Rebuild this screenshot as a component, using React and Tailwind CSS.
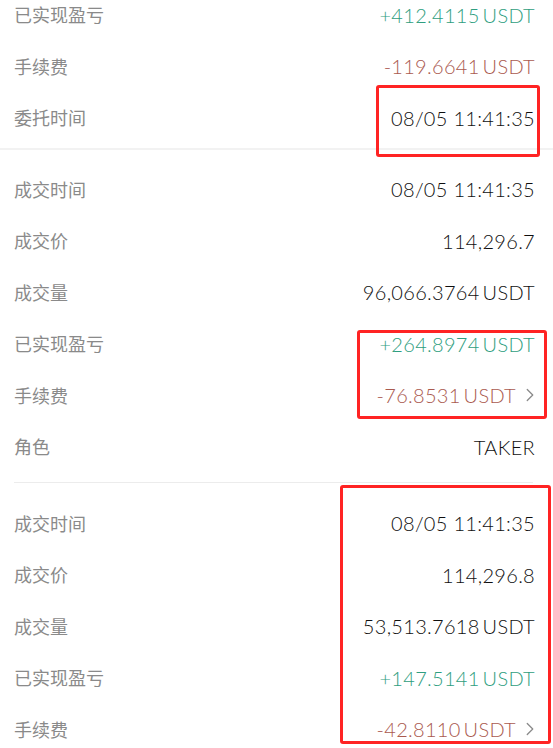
import React from "react";
import { ChevronRight } from "lucide-react";

const GREEN = "text-[#2f9e80]";
const RED = "text-[#aa5a4f]";

const sections = [
  [
    { label: "已实现盈亏", value: "+412.4115", unit: true, color: GREEN },
    { label: "手续费", value: "-119.6641", unit: true, color: RED },
    { label: "委托时间", value: "08/05 11:41:35" },
  ],
  [
    { label: "成交时间", value: "08/05 11:41:35" },
    { label: "成交价", value: "114,296.7" },
    { label: "成交量", value: "96,066.3764", unit: true },
    { label: "已实现盈亏", value: "+264.8974", unit: true, color: GREEN },
    { label: "手续费", value: "-76.8531", unit: true, color: RED, arrow: true },
    { label: "角色", value: "TAKER" },
  ],
  [
    { label: "成交时间", value: "08/05 11:41:35" },
    { label: "成交价", value: "114,296.8" },
    { label: "成交量", value: "53,513.7618", unit: true },
    { label: "已实现盈亏", value: "+147.5141", unit: true, color: GREEN },
    { label: "手续费", value: "-42.8110", unit: true, color: RED, arrow: true },
  ],
];

function Row({ item }) {
  return (
    <div className="h-[51.5px] flex items-center justify-between pl-[14px] pr-[18px]">
      <span className="text-[18px] text-[#8a8a8a] font-['Noto_Sans_CJK_SC',sans-serif]">
        {item.label}
      </span>
      <div className="flex items-center">
        <span
          className={`text-[20px] font-light font-['Lato',sans-serif] tracking-[0.3px] ${
            item.color || "text-[#0f0f0f]"
          }`}
        >
          {item.value}
          {item.unit && <span className="ml-[3px]">USDT</span>}
        </span>
        {item.arrow && (
          <ChevronRight
            size={22}
            strokeWidth={1.4}
            className="text-[#8a8a8a] ml-[3px] -mr-[6px]"
          />
        )}
      </div>
    </div>
  );
}

export default function App() {
  return (
    <div className="relative w-[553px] h-[748px] overflow-hidden bg-white">
      <div className="-mt-[11px] pb-[4px]">
        {sections[0].map((item, i) => (
          <Row key={i} item={item} />
        ))}
      </div>
      <div className="h-[2px] bg-[#f2f2f2]" />
      <div className="pt-[14px] pb-[9px]">
        {sections[1].map((item, i) => (
          <Row key={i} item={item} />
        ))}
      </div>
      <div className="h-px bg-[#ececec] ml-[14px] mr-[20px]" />
      <div className="pt-[15px]">
        {sections[2].map((item, i) => (
          <Row key={i} item={item} />
        ))}
      </div>

      {/* annotation boxes */}
      <div className="absolute left-[376px] top-[85px] w-[164px] h-[72px] border-[3px] border-[#ff2323] rounded-[3px]" />
      <div className="absolute left-[357px] top-[330px] w-[190px] h-[89px] border-[3px] border-[#ff2323] rounded-[3px]" />
      <div className="absolute left-[340px] top-[485px] w-[211px] h-[259px] border-[3px] border-[#ff2323] rounded-[3px]" />
    </div>
  );
}
